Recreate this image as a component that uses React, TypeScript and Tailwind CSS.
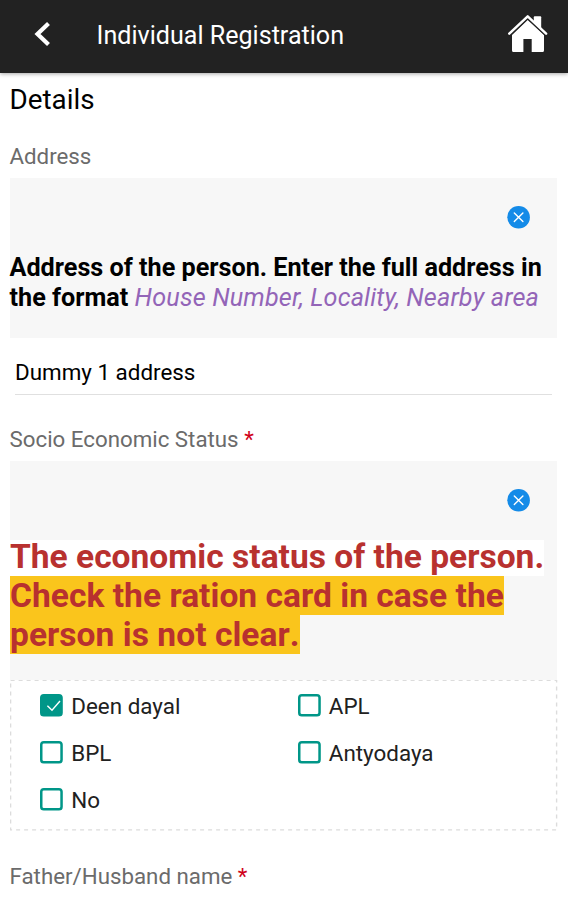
import React from "react";

function CloseBadge() {
  return (
    <svg className="block" width="24" height="24" viewBox="0 0 24 24" fill="none">
      <circle cx="11.6" cy="12.2" r="11.3" fill="#148be8" />
      <path d="M7.3 7.9 15.9 16.5M15.9 7.9 7.3 16.5" stroke="#fff" strokeWidth="1.4" strokeLinecap="round" />
    </svg>
  );
}

function HomeIcon() {
  return (
    <svg className="block" width="40" height="38" viewBox="0 0 40 38" fill="none">
      <path
        fill="#fff"
        d="M19.7 4.9 36 20V35.4a1.6 1.6 0 0 1-1.6 1.6H23.7V24H15.4V37H5.6A1.6 1.6 0 0 1 4 35.4V20z"
      />
      <path d="M.6 20.3 19.7 2.4 38.8 20.3" stroke="#222" strokeWidth="3" />
      <path fill="#fff" d="M25.8 2.2a.9.9 0 0 1 .9-.9h5.6a.9.9 0 0 1 .9.9V14l-7.4-6.6z" />
      <path
        d="M1.3 18.6 19.7 1.4 38.1 18.6"
        stroke="#fff"
        strokeWidth="2.5"
        strokeLinecap="round"
        strokeLinejoin="round"
      />
    </svg>
  );
}

function Label({ text, required }: { text: string; required?: boolean }) {
  return (
    <div className="-ml-[0.5px] text-[22.3px] leading-[26px] text-[#6b6b6b]">
      {text}
      {required && <span className="text-[#d0021b]"> *</span>}
    </div>
  );
}

function Option({ text, checked }: { text: string; checked?: boolean }) {
  return (
    <div className="flex h-[47.2px] items-start">
      <svg className="mt-px shrink-0" width="23" height="23" viewBox="0 0 23 23" fill="none">
        <rect
          x="1.25"
          y="1.25"
          width="20.3"
          height="20.1"
          rx="2.6"
          fill={checked ? "#009688" : "#fff"}
          stroke="#009688"
          strokeWidth="2.5"
        />
        {checked && <path d="M7.4 11.7 12 16.2 20 7" stroke="#fff" strokeWidth="1.4" />}
      </svg>
      <span className="ml-[8.3px] text-[22.4px] leading-[26px] text-[#212121]">{text}</span>
    </div>
  );
}

export default function App() {
  return (
    <div className="h-[915px] w-[568px] overflow-hidden bg-white font-['Roboto',sans-serif]">
      <header className="relative flex h-[73px] items-start bg-[#222] shadow-[0_1px_4px_rgba(0,0,0,0.35)]">
        <svg className="ml-[34px] mt-[21px]" width="18" height="26" viewBox="0 0 18 26" fill="none">
          <path d="M14.5 2.5 3.5 13 14.5 23.5" stroke="#fff" strokeWidth="4.2" />
        </svg>
        <h1 className="ml-[44.6px] mt-[21px] text-[25.1px] leading-[30px] text-white">Individual Registration</h1>
        <div className="ml-auto mr-[20px] mt-[15px]">
          <HomeIcon />
        </div>
      </header>
      <main className="pl-[10px] pr-[11px]">
        <h2 className="-ml-[0.5px] pt-[11px] text-[27.8px] leading-[32px] text-black">Details</h2>
        <div className="mt-[27px]">
          <Label text="Address" />
        </div>
        <section className="mt-[9px] h-[160px] bg-[#f7f7f7] pt-[27px]">
          <div className="flex justify-end pr-[26px]">
            <CloseBadge />
          </div>
          <p className="-ml-[0.5px] mt-[24px] whitespace-nowrap text-[25.2px] font-bold leading-[30px] text-black">
            Address of the person. Enter the full address in
            <br />
            the format{" "}
            <em className="font-normal tracking-[0.17px] text-[#9365b8]">House Number, Locality, Nearby area</em>
          </p>
        </section>
        <div className="mx-[5px] h-[57px] border-b border-[#e0e0e0] pt-[21px] text-[22.4px] leading-[26px] text-black">
          Dummy 1 address
        </div>
        <div className="mt-[31px]">
          <Label text="Socio Economic Status" required />
        </div>
        <section className="mt-[9px] h-[219px] bg-[#f7f7f7] pt-[27px]">
          <div className="flex justify-end pr-[26px]">
            <CloseBadge />
          </div>
          <p className="mt-[25px] whitespace-nowrap text-[33.55px] font-bold leading-[39px] text-[#b8312f]">
            <span className="bg-[linear-gradient(to_bottom,transparent_3px,white_3px)]">
              The economic status of the person.
            </span>
            <br />
            <span className="bg-[#fac51c] tracking-[0.02px]">Check the ration card in case the</span>
            <br />
            <span className="bg-[#fac51c] tracking-[0.03px] [font-kerning:none]">person is not clear.</span>
          </p>
        </section>
        <div className="relative h-[151px] pl-[30px] pt-[12.5px]">
          <svg className="pointer-events-none absolute left-0 top-0" width="548" height="151" fill="none">
            <rect
              x="0.6"
              y="0.4"
              width="546"
              height="149.5"
              stroke="#dcdcdc"
              strokeWidth="1.4"
              strokeDasharray="4 4"
            />
          </svg>
          <div className="grid grid-cols-[257.5px_1fr]">
            <Option text="Deen dayal" checked />
            <Option text="APL" />
            <Option text="BPL" />
            <Option text="Antyodaya" />
            <Option text="No" />
          </div>
        </div>
        <div className="mt-[32px]">
          <Label text="Father/Husband name" required />
        </div>
      </main>
    </div>
  );
}
